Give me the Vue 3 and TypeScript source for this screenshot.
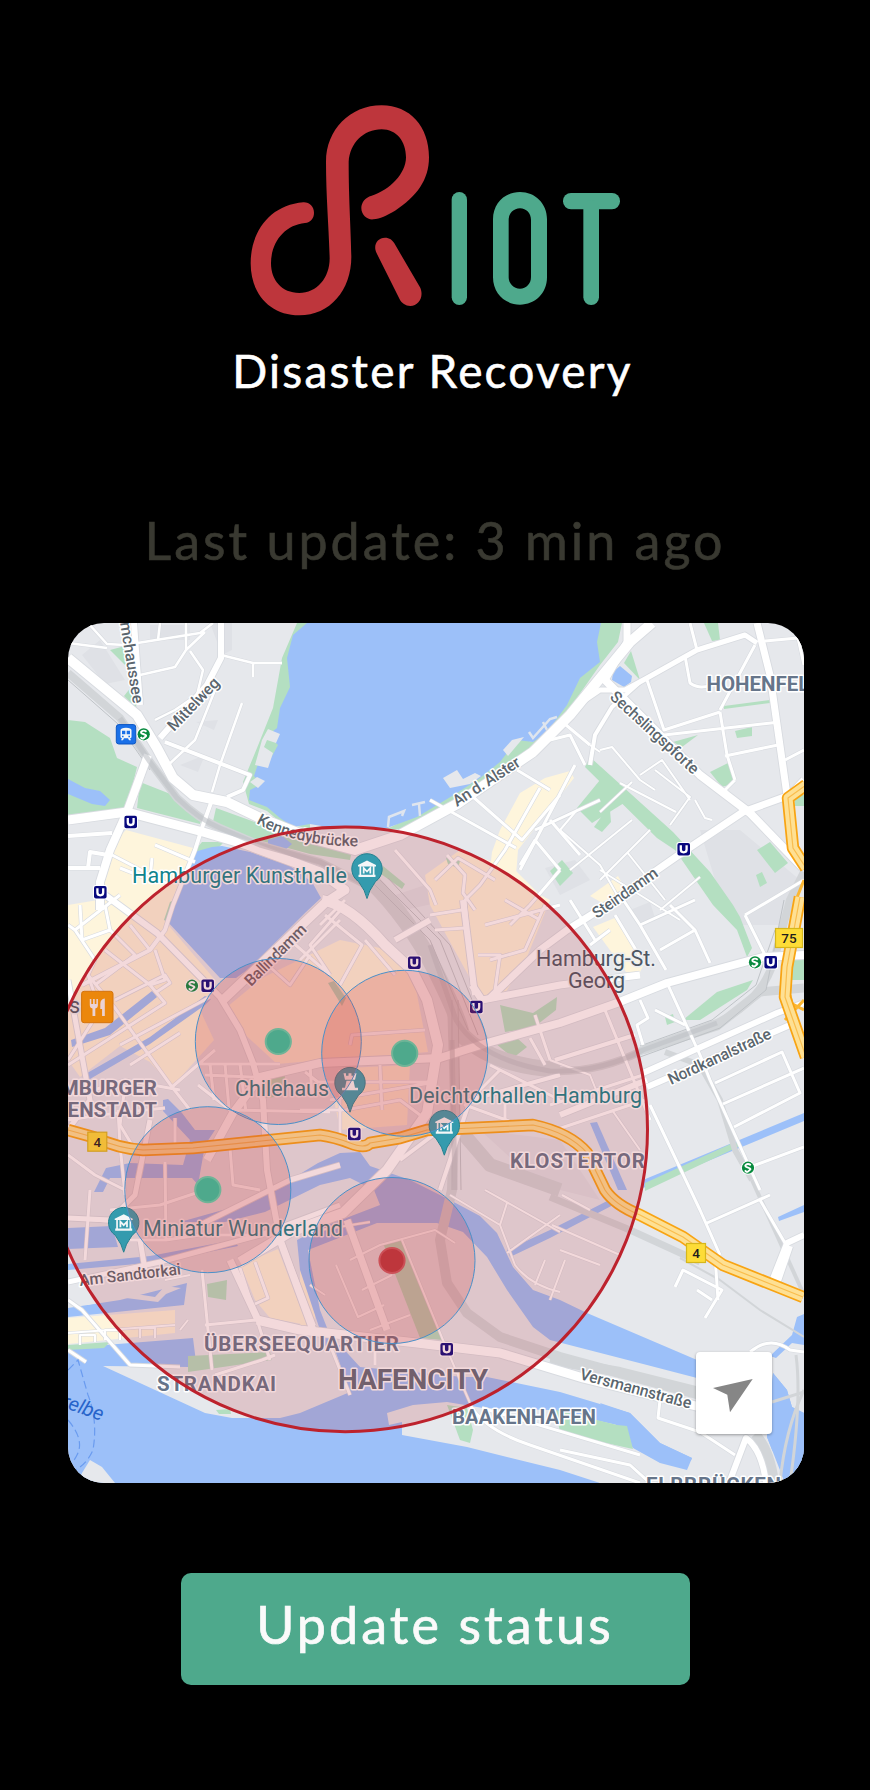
<script setup lang="ts">
interface Line { w: number; d: string }
interface Label { t: string; x: number; y: number; len?: number; r?: number; k: string; end?: boolean }
interface Point { x: number; y: number }

const water: string[] = [
  'M307 623L293 635L287 658L290 687L280 708L277 728L268 735L278 745L270 760L260 758L254 776L262 784L250 790L249 800L267 807L280 818L293 827L310 824L333 828L387 828L417 817L457 793L480 778L500 762L517 740L533 742L547 732L567 705L580 678L600 662L597 642L601 623Z',
  'M194 852L212 847L222 846L250 852L290 866L312 882L321 898L306 912L273 945L250 968L236 978L220 978L166 920L173 900Z',
  'M268 840L282 836L292 844L284 851L268 850Z',
  'M613 672L620 666L632 676L631 682L624 687L612 680Z',
  'M68 779L85 788L100 791L110 800L105 806L92 804L68 794Z',
  'M71 1040L105 1028L152 991L157 997L110 1035L72 1047Z',
  'M82 1076L150 1037L205 996L211 999L205 1005L150 1044L90 1079Z',
  'M163 1100L168 1099L182 1113L195 1130L215 1130L205 1145L198 1185L192 1178L110 1178L103 1192L94 1192L106 1168L130 1163L183 1165L190 1140L163 1111Z',
  'M68 1228L112 1226L118 1247L68 1249Z',
  'M68 1264L150 1256L234 1240L238 1246L160 1262L68 1270Z',
  'M180 1222L230 1208L290 1180L318 1163L340 1153L360 1152L370 1166L410 1180L450 1200L480 1216L497 1233L513 1267L533 1290L560 1300L587 1313L697 1360L697 1378L647 1365L550 1340L533 1327L507 1290L487 1257L463 1232L437 1223L377 1223L308 1250L320 1310L337 1353L360 1367L340 1367L325 1345L300 1270L297 1240L320 1228L380 1205L374 1190L350 1178L320 1185L265 1212L225 1222Z',
  'M68 1308L120 1300L187 1283L184 1305L68 1317Z',
  'M68 1348L193 1338L197 1370L340 1345L360 1367L463 1377L487 1377L560 1392L630 1413L660 1443L692 1458L687 1470L660 1463L633 1448L560 1440L600 1483L68 1483Z',
  'M550 1238L617 1203L617 1196L550 1230L507 1250L510 1257Z',
  'M643 1188L804 1121L804 1113L643 1180Z', 'M590 1123L597 1122L627 1190L618 1190Z',
  'M778 1217L804 1205L804 1212L779 1221Z',
  'M773 1373L787 1390L792 1407L804 1413V1483H785L767 1437Z',
  'M770 1356L792 1335L797 1317L804 1314V1345L792 1343L776 1358Z',
]
const landOver: string[] = [
  'M103 1366L190 1367L215 1330L335 1350L350 1392L300 1413L280 1418L232 1418L205 1413Z',
  'M387 1413L413 1405L447 1402L483 1408L550 1410L617 1425L680 1462L780 1450V1483H600L560 1470L467 1447L402 1435L402 1422L389 1425Z',
  'M82 1473L90 1460L102 1467L115 1483H78Z',
  'M86 1301L117 1291L155 1297L165 1286L181 1288L166 1294L158 1302L118 1297L88 1305Z',
  'M443 778L457 770L463 779L475 773L481 776L470 784L450 788Z',
  'M503 750L512 740L524 737L508 756Z',
]
const waterOver: string[] = [
  'M600 1403L630 1413L660 1443L692 1458L687 1470L660 1463L633 1448Z',
  'M773 1373L787 1390L792 1407L804 1413V1483H785L767 1437Z',
]
const greens: string[] = [
  'M297 623L282 658L273 708L257 748L243 782L249 804L267 811L280 822L310 829L310 623Z',
  'M68 720L85 722L110 738L117 758L137 767L127 808L68 815Z',
  'M140 782L173 795L203 815L200 824L137 808Z',
  'M216 808L260 824L300 840L352 850L350 860L310 854L258 840L212 826Z',
  'M110 650L125 646L127 667Z', 'M124 696L132 686L137 710Z',
  'M190 856L202 842L224 842L214 852L196 862L180 890Z',
  'M601 623H622L618 642L600 665L567 712L547 738L517 760L470 790L410 828L385 830L417 814L457 791L500 760L515 738L533 742L560 700L580 675Z',
  'M631 651L640 680L624 663Z',
  'M590 757L585 767L657 838L675 850L713 905L737 930L747 957L752 948L740 917L733 905L710 872L673 832Z',
  'M600 780L577 808L592 823L624 803Z', 'M604 813L594 827L602 832L611 822L610 810Z',
  'M710 772L730 762L735 783L722 787Z', 'M757 850L770 842L788 863L775 873Z',
  'M550 871L562 860L573 873L560 886Z', 'M704 623H718L720 640L712 641Z',
  'M724 706L770 700V703L724 709Z', 'M735 731L752 727V736L737 738Z', 'M673 742L698 735L682 747Z',
  'M756 875L762 872L767 883L760 887Z', 'M794 795H804V806H795Z', 'M790 957H804V980H790Z',
  'M683 1020L717 992L753 980L747 990L700 1020Z', 'M665 1017L673 1014L675 1022L667 1025Z',
  'M500 1005L533 1013L557 997L556 1010L533 1028L505 1032Z', 'M495 1043L517 1038L527 1047L513 1058Z',
  'M383 866L405 884L402 889L381 874Z', 'M446 858L460 861L458 868L448 864Z',
  'M328 983L334 981L346 998L342 1006Z', 'M264 1082L285 1075L284 1096L266 1098Z',
  'M383 1243L402 1240L443 1340L420 1338Z', 'M207 1284L227 1280L226 1300L208 1297Z',
  'M188 1356L270 1352L272 1360L188 1372Z', 'M68 1345L110 1342L104 1348L68 1350Z',
  'M645 1183L735 1142L740 1146L645 1191Z',
  'M447 1405L467 1408L473 1430L470 1443L460 1440Z',
  'M556 1410L617 1425L627 1426L633 1449L560 1433Z', 'M216 1410L230 1409L231 1414L219 1414Z',
  'M164 920L170 902L174 900L167 921Z', 'M222 994L240 983L244 986L226 998Z',
]
const yellows: string[] = [
  'M126 830L193 848L172 900L164 920L216 981L200 1010L214 1040L172 1087L150 1062L120 1046L80 1077L68 1060V905L98 900L106 850Z',
  'M227 1007L262 978L340 940L390 950L413 973L428 1052L300 1062L277 1064L240 1030Z',
  'M520 793L545 778L570 771L574 778L545 815L518 850L515 888L490 870L492 852L500 830Z',
  'M425 875L460 850L515 870L540 895L550 900L525 962L505 993L482 1000L450 942L430 905Z',
  'M590 896L618 876L625 888L606 905Z',
  'M593 927L617 917L645 962L638 976L626 972Z',
  'M345 1068L410 1065L407 1125L340 1130L335 1105Z',
  'M68 1318L175 1310L175 1333L68 1344Z',
  'M241 1266L257 1258L278 1249L307 1325L270 1318L255 1300Z',
  'M300 1262L316 1312L313 1326L300 1326Z',
]
const darks: string[] = [
  'M82 655L100 640L125 680L105 684Z', 'M196 722L218 720L214 730Z', 'M180 765L205 755L198 772Z',
  'M700 830L740 830L800 880L785 925L735 925L715 880Z', 'M630 910L650 902L655 918L640 925Z',
  'M545 868L575 860L590 880L560 895Z', 'M380 900L440 880L450 900L405 910Z', 'M68 915L80 930V965L68 967Z',
  'M150 625H190V640H150Z', 'M210 623L232 623V650L222 655Z', 'M480 1130L560 1140L600 1200L540 1185Z',
]
const rails: Line[] = [
  { w: 8, d: 'M68 673L120 718L150 762L177 798Q200 820 220 828L260 845L320 862L372 888L410 925L440 975L456 1020Q480 1060 550 1071Q600 1073 643 1050L717 1023Q763 1000 774 960L790 900L804 872' },
  { w: 16, d: 'M370 880Q410 920 435 970T462 1035Q492 1066 560 1070' },
  { w: 10, d: 'M452 1000L455 1100L452 1190L440 1240L447 1283L467 1313L500 1337L560 1357L700 1395' },
  { w: 14, d: 'M460 1130L490 1165L560 1190' },
  { w: 7, d: 'M550 1197L630 1230L700 1262' }, { w: 2, d: 'M680 1258L720 1280L760 1310L804 1337' },
  { w: 9, d: 'M643 1050L717 1026L760 992L804 988' },
  { w: 6, d: 'M665 1052L700 1065L720 1100L735 1150L752 1180' },
  { w: 4, d: 'M752 1180L804 1295' }, { w: 3, d: 'M772 1402L804 1392' },
  { w: 10, d: 'M550 1360L620 1372L700 1392' }, { w: 10, d: 'M755 1434Q770 1450 774 1483' },
  { w: 3, d: 'M804 1390Q785 1430 780 1483' }, { w: 3, d: 'M796 1355Q802 1400 790 1483' },
]
const minor: Line[] = [
  { w: 2.5, d: 'M88 623L107 644L125 645L200 633L213 623M68 643L107 648M160 623L158 640M186 623V650L175 667L140 675M205 632L186 650M190 651L203 670L197 695L175 710L155 720M221 655L253 663L282 663M253 663V677M242 703L220 765L212 792M165 742L250 775M165 768L195 740L215 690' },
  { w: 4, d: 'M165 742L250 775L243 790L227 797M212 800L203 825L195 850L173 905L165 930L150 950L82 985M68 836L112 833M68 868L100 868M88 868L90 852L108 855' },
  { w: 3, d: 'M112 855L170 885M152 858L150 880L120 868M155 845L195 862M120 895L75 930L68 925M75 930L95 960L88 975L100 1010L68 1060M80 905L82 940L110 930L105 905M110 930L135 955L95 985M135 1150L120 1125L125 1085M105 950L150 985M150 950L130 925' },
  { w: 3, d: 'M88 975L115 1008L172 1087L190 1110M172 1087L215 1050M155 950L165 980L150 985M150 985L165 1003L68 1065M115 1000L165 975L170 983L155 993M120 1045L210 997M130 1065L180 1033M200 1064L280 1064M205 1075L270 1078M198 1085L230 1110L330 1112M210 1064L214 1100M225 1064L229 1108M240 1064L246 1112' },
  { w: 3, d: 'M68 1155L95 1175L125 1190M68 1120L100 1115L165 1108M118 1110L120 1145L125 1195M94 1090L125 1080L180 1090M175 1118V1145M230 1148L233 1185L260 1190M165 1162L166 1240M120 1240L166 1240L200 1235L290 1235M68 1218L120 1222M90 1190L85 1260M205 1190L160 1205L110 1210' },
  { w: 3, d: 'M305 1072L318 1082L430 1082M310 1064L312 1096M350 1045L352 1035L425 1030M340 1070V1140M380 1065L382 1110M330 1100L430 1083M300 1110L345 1110L400 1100L420 1115M325 915L362 945L340 985M345 905L310 945L330 975M300 960L340 920M320 925L345 900M262 960L290 985L310 955M290 940L330 975M365 940L395 975' },
  { w: 3, d: 'M430 800L516 848M472 796L522 840L560 795M517 770L550 790M435 880L458 858L495 880M395 850L430 890L436 905M447 855L465 875L463 893L475 910M540 788L505 850L480 885L465 900L472 985M575 765L520 870M550 820L580 855M520 865L535 840L560 870M600 800L535 830M590 745L560 720M585 765L570 735L550 740' },
  { w: 3, d: 'M435 930L465 928M430 915L462 910M478 955L500 955L495 990M505 900L540 920M545 905L525 950L490 960M560 870L530 905L510 925M485 925L560 905M570 900L595 940M535 1015L550 1060M530 1038L545 1065M490 1065L560 1100M500 1070L465 1105L520 1125M505 1090V1125M550 1105L643 1075M555 1130L645 1100M605 1010L650 1120' },
  { w: 3, d: 'M685 656L690 683Q700 690 710 685M720 712L727 755L735 780M647 680L664 730L720 712M755 645L720 710M690 623L697 650M725 756L778 745M664 735L780 722M765 641L798 638L804 665M785 760L804 750M735 780L725 790L743 812' },
  { w: 2, d: 'M600 752L590 745M600 750L612 747L640 780L655 790M620 783L676 812M632 782L600 812M655 770L690 797L670 825M577 810L560 830L600 865L620 900M632 820L570 870M650 830L600 880M627 852L665 900M600 870L680 920M700 877L660 910M695 800L705 818L712 820M640 775L662 760L690 800' },
  { w: 3, d: 'M620 895L640 925L666 970M640 925L695 900M670 905L695 930L660 950M695 930L710 963M745 915L765 955M745 915L804 880M615 915L645 965M610 930L590 945M640 1000L648 1018L637 1025L643 1045M655 1010L685 1025M668 985L700 1055L710 1080L760 1190M715 1083L782 1052L800 1093L734 1127M723 1104L804 1068' },
  { w: 3, d: 'M650 1105L700 1210L720 1255M707 1223L770 1195M750 1167L804 1147M760 1200L785 1243L804 1235M675 1287L683 1270L722 1290L705 1318M697 1290L712 1300M750 1352Q770 1335 790 1350L804 1352M715 1255L718 1300' },
  { w: 2, d: 'M336 1265L358 1317L384 1305M350 1260L380 1245L435 1230L455 1243M362 1290L392 1275M370 1330L410 1315M402 1240L445 1345L470 1403M320 1230L370 1222M310 1285L325 1295M450 1195L500 1225L507 1203M500 1225L515 1265Q530 1285 560 1292M507 1253L560 1215M535 1285L545 1260M485 1190L560 1232' },
  { w: 3, d: 'M202 1270L212 1370M205 1325L257 1320L270 1360M240 1268L257 1320M215 1375L262 1360L275 1355M255 1262L268 1298L255 1304M330 1345L350 1395M375 1345V1365M470 1405Q485 1430 530 1445L640 1483M482 1408L640 1455M560 1450L630 1465L650 1483M660 1400L658 1418L700 1432L735 1455' },
  { w: 2, d: 'M68 1333L175 1325M80 1345V1335H95V1342M105 1340V1330H120V1340M140 1338V1328H155V1338M180 1330L188 1320M165 1280L190 1275M550 1060L590 1075L600 1100M612 1110L640 1150M560 1250L600 1265M565 1260L550 1300M552 1225L620 1255M562 1195L590 1210' },
]
const major: Line[] = [
  { w: 6, d: 'M221 623V658L207 685L160 738M134 623L140 705' },
  { w: 10, d: 'M68 658L137 715L157 748L173 778L193 795L227 802L260 818L310 838L355 850L400 835L457 804L533 752L570 715L597 682L630 642L652 623' },
  { w: 7, d: 'M627 623V642L605 680' },
  { w: 5, d: 'M575 707L600 690L625 690L647 678L697 650L745 635L757 643' },
  { w: 8, d: 'M148 755L127 812L110 850L100 882V910' },
  { w: 9, d: 'M68 820L127 812L203 832L247 845L320 872L345 890L325 903L223 1000' },
  { w: 10, d: 'M322 900Q350 905 385 945L412 970L427 1000L438 1045L427 1113L387 1170L343 1213L290 1232L240 1262' },
  { w: 6, d: 'M395 940L430 920M105 895L157 933L220 997L240 1030L253 1063L263 1100L267 1170L280 1240L313 1326' },
  { w: 8, d: 'M207 1160L233 1113L260 1077L320 1063L440 1058L487 1043L560 1023L617 1003L667 983L763 957L804 955' },
  { w: 5, d: 'M68 1218L110 1220L135 1195L150 1120M68 1130L90 1100L68 980M140 1240L145 1270M290 1180L340 1165M180 1235L290 1180M68 1282L160 1262L260 1235L340 1205' },
  { w: 7, d: 'M347 1220L387 1330M230 1260L258 1320M280 1240L313 1330' },
  { w: 9, d: 'M257 1320L300 1330L417 1343L500 1353L583 1378L700 1407' },
  { w: 8, d: 'M600 675L700 775L750 813L803 868' },
  { w: 7, d: 'M804 780L790 795L743 812L683 852L607 905L567 930L540 950L490 998' },
  { w: 7, d: 'M757 623L770 675L787 795M472 985L482 1000L560 985L640 975' },
  { w: 6, d: 'M643 1073L777 1013L804 1003M647 1087L790 1025M560 1115L647 1080M463 900L475 995' },
  { w: 4, d: 'M590 765L595 735L612 707L640 682M400 1160L440 1130M440 1190L470 1100L560 1075M635 1035L555 1060' },
  { w: 6, d: 'M772 1281L787 1243L804 1235M729 1483L746 1438Q762 1450 766 1483M778 1281L790 1246' },
  { w: 3, d: 'M68 1300L82 1310L130 1365L180 1367M68 1350L86 1362' },
]
const highways: string[] = [
  'M68 1130L93 1137Q120 1149 143 1150L193 1148L320 1135Q335 1137 350 1143T370 1143L400 1138L427 1130L473 1128L533 1125Q570 1133 587 1153L605 1190Q615 1205 640 1215L683 1237L723 1265L803 1297',
  'M806 785L788 798L793 848L806 868', 'M800 897L787 967L785 997L806 1057',
]
const ramps = 'M785 1000L804 1010M785 1020L804 1000M790 995L800 1040M804 880L796 900'

const labels: Label[] = [
  { t: 'Blumchaussee', x: 133, y: 704, r: 81, k: 'street', end: true },
  { t: 'Mittelweg', x: 174, y: 732, len: 67, r: -46, k: 'street' },
  { t: 'An d. Alster', x: 457, y: 807, len: 77, r: -33, k: 'street' },
  { t: 'Sechslingspforte', x: 609, y: 698, len: 114, r: 42.5, k: 'street' },
  { t: 'Steindamm', x: 597, y: 919, len: 76, r: -35, k: 'street' },
  { t: 'Ballindamm', x: 251, y: 987, len: 80, r: -45, k: 'street' },
  { t: 'Nordkanalstraße', x: 671, y: 1085, len: 112, r: -25, k: 'street' },
  { t: 'Am Sandtorkai', x: 80, y: 1286, len: 102, r: -6.6, k: 'street' },
  { t: 'Versmannstraße', x: 579, y: 1379, len: 115, r: 15, k: 'street' },
  { t: 'Hamburger Kunsthalle', x: 132, y: 882.5, len: 215, k: 'poi' },
  { t: 'Chilehaus', x: 235, y: 1096, len: 94, k: 'poi' },
  { t: 'Deichtorhallen Hamburg', x: 409, y: 1102.5, len: 233, k: 'poi' },
  { t: 'Miniatur Wunderland', x: 143, y: 1236, len: 200, k: 'poi' },
  { t: 'Hamburg-St.', x: 536, y: 966, len: 120, k: 'town' },
  { t: 'Georg', x: 568, y: 987.5, len: 57, k: 'town' },
  { t: 's', x: 69, y: 1013, k: 'town' },
  { t: 'HOHENFELDE', x: 706.5, y: 691, k: 'area' },
  { t: 'HAMBURGER', x: 157, y: 1095, k: 'area', end: true },
  { t: 'NEUENSTADT', x: 157, y: 1117, k: 'area', end: true },
  { t: 'KLOSTERTOR', x: 510, y: 1168, len: 135, k: 'area' },
  { t: 'ÜBERSEEQUARTIER', x: 204, y: 1351, len: 195, k: 'area' },
  { t: 'STRANDKAI', x: 157, y: 1390.5, len: 119, k: 'area' },
  { t: 'BAAKENHAFEN', x: 452, y: 1424, len: 144, k: 'area' },
  { t: 'ELBBRÜCKEN', x: 646, y: 1491.5, len: 135, k: 'area' },
  { t: 'HAFENCITY', x: 338, y: 1389, len: 150, k: 'city' },
  { t: 'Norderelbe', x: 101, y: 1421, r: 20, k: 'river', end: true },
]
const subways: Point[] = [
  { x: 130.7, y: 822 }, { x: 100.3, y: 892.3 }, { x: 683.7, y: 849.3 }, { x: 207.7, y: 985.7 }, { x: 414.3, y: 962.7 },
  { x: 476.3, y: 1007 }, { x: 354.3, y: 1134 }, { x: 770.7, y: 962.3 }, { x: 446.7, y: 1349.3 },
]
const trains: Point[] = [{ x: 143.7, y: 734.3 }, { x: 192, y: 985.7 }, { x: 755, y: 962.3 }, { x: 748, y: 1167.7 }]
const shields = [{ x: 97.3, y: 1141.7, w: 19, t: '4' }, { x: 696, y: 1253, w: 19, t: '4' }, { x: 789, y: 938, w: 27, t: '75' }]
const pins = [
  { x: 367, y: 869, tower: false }, { x: 350, y: 1082.7, tower: true },
  { x: 444.3, y: 1125.7, tower: false }, { x: 123.7, y: 1222.7, tower: false },
]
const devices = [
  { x: 278.3, y: 1041.5, status: 'ok' }, { x: 404.7, y: 1053.3, status: 'ok' },
  { x: 207.8, y: 1189.7, status: 'ok' }, { x: 392, y: 1260.5, status: 'alert' },
]
const turn = (l: Label) => `translate(${l.x} ${l.y}) rotate(${l.r ?? 0})`
</script>

<template>
  <main class="page">
    <svg class="logo" viewBox="0 0 1290 690" aria-label="RIOT">
      <g class="logo-red">
        <path d="M250 337C150 345 92 425 92 520C92 612 150 676 238 676C330 676 394 600 394 500C392 400 386 330 386 215C390 160 430 118 485 118C530 118 558 155 558 202C558 250 510 300 455 317C435 322 424 338 424 354C424 375 442 390 460 388C480 386 500 377 525 362C590 320 627 270 627 202C627 110 570 46 485 46C390 46 318 120 318 215C318 320 326 400 329 505C329 565 290 609 238 609C185 609 153 570 153 520C153 455 195 405 255 399C272 397 282 385 282 368C282 350 268 336 250 337Z" />
        <path d="M470 490C458 466 472 443 495 443C508 443 518 450 523 460L600 592C613 618 597 648 571 648C557 648 545 640 539 628Z" />
      </g>
      <g class="logo-green">
        <rect x="695" y="306" width="46" height="339" rx="23" />
        <path fill-rule="evenodd" d="M819 388C819 340 855 306 900 306S981 340 981 388V562C981 610 945 644 900 644S819 610 819 562ZM866 390V561C866 581 881 596 900 596S933 581 933 561V390C933 370 919 355 900 355S866 370 866 390Z" />
        <rect x="1029" y="309" width="171" height="49" rx="24" />
        <rect x="1090" y="330" width="47" height="315" rx="23" />
      </g>
    </svg>
    <h1 class="title">Disaster Recovery</h1>
    <p class="updated">Last update: 3 min ago</p>

    <section class="map">
      <svg class="map-art" viewBox="68 623 736 860">
        <rect class="land" x="68" y="623" width="736" height="860" />
        <path v-for="(d, i) in darks" :key="'d' + i" class="dark" :d="d" />
        <path v-for="(d, i) in yellows" :key="'y' + i" class="yellow" :d="d" />
        <path v-for="(d, i) in greens.slice(0, 9)" :key="'g' + i" class="green" :d="d" />
        <path v-for="(d, i) in water" :key="'w' + i" class="water" :d="d" />
        <path v-for="(d, i) in landOver" :key="'l' + i" class="land" :d="d" />
        <path v-for="(d, i) in waterOver" :key="'wo' + i" class="water" :d="d" />
        <path v-for="(d, i) in greens.slice(9)" :key="'h' + i" class="green" :d="d" />
        <path class="land" d="M268 729L280 734L276 743L267 740L264 747L273 753L268 768L255 765L262 740ZM250 782L257 777L265 781L258 788Z" />
        <path class="pier" d="M388 827L389 817L404 811L402 816M412 805L425 802M419 804L420 816M529 732L533 738L550 719L557 717M543 722L549 734" />
        <path v-for="(l, i) in rails" :key="'r' + i" class="rail" :d="l.d" :stroke-width="l.w" />
        <path class="rail-lines" d="M68 680L118 724L150 770M370 880L430 940L468 1030M380 880L440 940L478 1035M388 878L450 945L490 1045M452 1000L452 1190M458 1000L461 1190M640 1057L720 1028L766 990L784 900M640 1046L712 1020L756 985L775 930" />
        <path v-for="(l, i) in minor" :key="'mc' + i" class="casing" :d="l.d" :stroke-width="l.w + 1.2" />
        <path v-for="(l, i) in major" :key="'jc' + i" class="casing" :d="l.d" :stroke-width="l.w + 1.8" />
        <path v-for="(l, i) in minor" :key="'m' + i" class="road" :d="l.d" :stroke-width="l.w" />
        <path v-for="(l, i) in major" :key="'j' + i" class="road" :d="l.d" :stroke-width="l.w" />
        <path class="rail-over" d="M120 718L150 762L177 798Q200 820 220 828L260 845L320 862L372 888" />
        <path class="rail-over" d="M430 945L456 1020Q480 1060 550 1071Q600 1073 643 1050L717 1023M452 1040L455 1190" />
        <path class="ramp" :d="ramps" />
        <g v-for="(d, i) in highways" :key="'hw' + i">
          <path class="hw-edge" :d="d" /><path class="hw-fill" :d="d" /><path class="hw-mid" :d="d" />
        </g>
        <path class="ferry" d="M68 1370L78 1360L88 1395Q98 1420 93 1450Q85 1468 68 1473M68 1420Q85 1440 77 1455Q72 1465 68 1465" />

        <path id="kennedy" class="guide" d="M256 823Q300 848 364 846" />
        <text class="street"><textPath href="#kennedy" textLength="106">Kennedybrücke</textPath></text>
        <text
          v-for="l in labels" :key="l.t" :class="l.k" :transform="turn(l)"
          :text-anchor="l.end ? 'end' : 'start'" :textLength="l.len"
        >{{ l.t }}</text>

        <g v-for="(p, i) in subways" :key="'u' + i" :transform="`translate(${p.x} ${p.y})`">
          <rect class="halo" x="-7.3" y="-7.3" width="14.6" height="14.6" rx="2.5" />
          <rect class="ubahn" x="-6.3" y="-6.3" width="12.6" height="12.6" rx="2" />
          <path class="u-mark" d="M-2.9 -4V.3Q-2.9 3 0 3T2.9 .3V-4" />
        </g>
        <g v-for="(p, i) in trains" :key="'s' + i" :transform="`translate(${p.x} ${p.y})`">
          <circle class="halo" r="7" /><circle class="sbahn" r="6.1" />
          <path class="s-mark" d="M2.8 -2.6Q0 -4.5 -2 -3T-.5 -.3T2.3 1.8T0 3.8T-3 2.6" />
        </g>
        <g transform="translate(126 734.3)">
          <rect class="station" x="-9.7" y="-9.7" width="19.4" height="19.4" rx="2.5" />
          <path class="white" fill-rule="evenodd" d="M-5.5 -4Q-5.5 -6.5 0 -6.5T5.5 -4V2.5Q5.5 4 4 4L5 6H3L2 4H-2L-3 6H-5L-4 4Q-5.5 4 -5.5 2.5ZM-4 -3.5V0H-.7V-3.5ZM.7 -3.5V0H4V-3.5ZM-4 1.5V3H-2.4V1.5ZM2.4 1.5V3H4V1.5Z" />
        </g>
        <g transform="translate(97.3 1007)">
          <rect class="food" x="-15.7" y="-15.7" width="31.4" height="31.4" rx="2.5" />
          <path class="white" d="M-7.5 -8H-6V-3H-4.2V-8H-2.6V-3H-.9V-8H.6V-2Q.6 1 -2 1.5V9H-4.8V1.5Q-7.5 1 -7.5 -2ZM3 -3Q3 -8 7.5 -8.5V9H4.8V2H3Z" />
        </g>
        <g v-for="(s, i) in shields" :key="'sh' + i" :transform="`translate(${s.x} ${s.y})`">
          <rect class="shield" :x="-s.w / 2" y="-9.5" :width="s.w" height="19" />
          <text class="shield-text" y="4.8" text-anchor="middle">{{ s.t }}</text>
        </g>

        <circle class="area-zone" cx="345.2" cy="1129.4" r="302.3" />
        <g v-for="(p, i) in pins" :key="'p' + i" :transform="`translate(${p.x} ${p.y})`">
          <path class="pin" d="M0 29.5Q-1.5 22 -8.5 12.5A15.2 15.2 0 1 1 8.5 12.5Q1.5 22 0 29.5Z" />
          <path v-if="p.tower" class="white" d="M-6.5 -9.5H-4V-7H-1.5V-9.5H1.5V-7H4V-9.5H6.5L5 -3H-5ZM-3.5 -2H3.5L5 5H8V7.5H-8V5H-5Z" />
          <g v-else>
            <path class="white" d="M-9 -4L0 -8.5L9 -4V-2.6H-9ZM-7.5 -3H-5.8V6H-7.5ZM5.8 -3H7.5V6H5.8ZM-8.5 5.7H8.5V8H-8.5Z" />
            <path class="m-mark" d="M-3.3 4.5V-1L0 2.5L3.3 -1V4.5" />
          </g>
        </g>
        <circle v-for="(p, i) in devices" :key="'z' + i" class="device-zone" :cx="p.x" :cy="p.y" r="83" />
        <circle v-for="(p, i) in devices" :key="'n' + i" class="device" :class="p.status" :cx="p.x" :cy="p.y" r="12.6" />
      </svg>
      <button class="locate" aria-label="Locate">
        <svg viewBox="0 0 76 82"><path d="M17 36L56.7 27L34 60.3L31.3 42.7Z" /></svg>
      </button>
    </section>

    <button class="update">Update status</button>
  </main>
</template>

<style>
body { margin: 0; background: #000; }
</style>

<style scoped>
.page {
  width: 870px; height: 1790px; box-sizing: border-box; padding-top: 90px; background: #000;
  display: flex; flex-direction: column; align-items: center; font-family: Lato, "Open Sans", sans-serif;
}
.logo { width: 430px; height: 230px; display: block; }
.logo-red { fill: #be363c; }
.logo-green { fill: #4ea98c; }
.title {
  margin: 21px 5px 0 0; font-size: 46px; line-height: 60px; font-weight: 400; letter-spacing: 2.2px;
  color: #fff; white-space: nowrap; -webkit-text-stroke: 0.6px #fff;
}
.updated {
  margin: 107px 0 0; font-size: 52px; line-height: 64px; letter-spacing: 3px; color: #393931;
  white-space: nowrap; -webkit-text-stroke: 0.6px #393931;
}
.map { position: relative; width: 736px; height: 860px; margin-top: 51px; flex: none; border-radius: 36px; overflow: hidden; margin-left: 2px; }
.map-art { display: block; width: 736px; height: 860px; font-family: Roboto, sans-serif; }
.land { fill: #e6e8ec; }
.dark { fill: #dfe1e6; }
.yellow { fill: #fef5dc; }
.green { fill: #b4dfc1; }
.water { fill: #9cc0f9; }
.pier { fill: none; stroke: #dfe5ee; stroke-width: 2.5; }
.rail, .rail-lines, .rail-over, .casing, .road { fill: none; stroke-linejoin: round; }
.rail { stroke: #d2d5d8; }
.rail-lines { stroke: #bfc3c7; stroke-width: 1; }
.rail-over { stroke: rgba(190, 194, 198, 0.6); stroke-width: 5; }
.casing { stroke: #d8dbe0; }
.road { stroke: #fff; }
.ramp { fill: none; stroke: #fbb733; stroke-width: 3; }
.hw-edge, .hw-fill, .hw-mid { fill: none; stroke-linejoin: round; }
.hw-edge { stroke: #f8a413; stroke-width: 12.5; }
.hw-fill { stroke: #fee093; stroke-width: 9; }
.hw-mid { stroke: #f9bd4e; stroke-width: 1.2; }
.ferry { fill: none; stroke: #6a9bef; stroke-width: 1.2; stroke-dasharray: 8 4; }
.guide { fill: none; }
text { stroke: #fff; stroke-width: 3px; stroke-linejoin: round; paint-order: stroke; }
.street { font-size: 16px; font-weight: 500; fill: #5b666e; }
.poi { font-size: 21.5px; fill: #10838d; }
.town { font-size: 21.5px; fill: #4c5663; stroke: #eceef1; }
.area { font-size: 20.5px; font-weight: 700; fill: #66758a; }
.city { font-size: 28px; font-weight: 700; fill: #616a78; }
.river { font-size: 20px; font-style: italic; fill: #2864ca; stroke: none; }
.halo { fill: #fff; }
.ubahn { fill: #08087e; }
.u-mark { fill: none; stroke: #fff; stroke-width: 2.3; }
.sbahn { fill: #078a3e; }
.s-mark { fill: none; stroke: #fff; stroke-width: 1.9; }
.station { fill: #1a70e8; stroke: #0c57c4; stroke-width: 1; }
.food { fill: #f69a00; stroke: #d98300; stroke-width: 1; }
.white { fill: #f4f7f8; }
.shield { fill: #fddc37; stroke: #d6b71c; stroke-width: 1.2; }
.shield-text { font-size: 13.5px; font-weight: 500; fill: #1d1d1d; stroke: none; }
.area-zone { fill: rgba(193, 53, 62, 0.19); stroke: #bd222d; stroke-width: 3; }
.pin { fill: #349bae; stroke: #23808f; stroke-width: 1; }
.m-mark { fill: none; stroke: #f4f7f8; stroke-width: 1.8; }
.device-zone { fill: rgba(208, 66, 66, 0.22); stroke: #4a90c9; stroke-width: 1; }
.device { stroke-width: 2; }
.device.ok { fill: #4ea98c; stroke: #6fb497; }
.device.alert { fill: #be363c; stroke: #cc5057; }
.locate {
  position: absolute; right: 32px; bottom: 49px; width: 76px; height: 82px; padding: 0; border: 0;
  border-radius: 4px; background: #fff; box-shadow: 0 1px 3px rgba(0, 0, 0, 0.35);
}
.locate svg { display: block; width: 76px; height: 82px; fill: #868686; }
.update {
  width: 509px; height: 112px; flex: none; margin-top: 90px; padding: 0 0 11px; border: 0; border-radius: 10px;
  background: #4ea98c; color: #fafafa; font: 400 52px Lato, "Open Sans", sans-serif; letter-spacing: 3.1px;
  -webkit-text-stroke: 0.7px #fafafa;
}
</style>
